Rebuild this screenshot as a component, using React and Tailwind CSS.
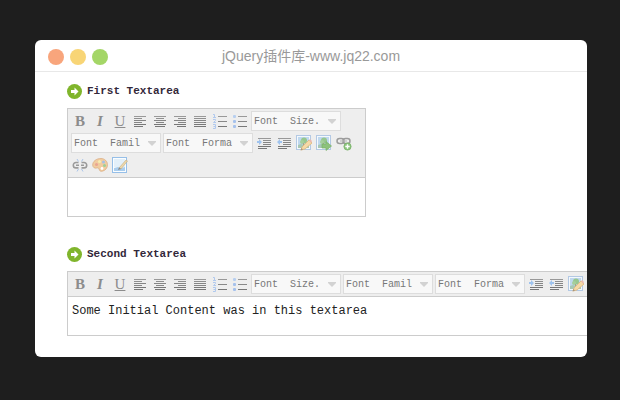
import React from 'react';

const lineIcons = {
    left: [[2, 12], [2, 8], [2, 12], [2, 8], [2, 12], [2, 9]],
    center: [[2, 12], [4, 8], [2, 12], [4, 8], [2, 12], [3, 10]],
    right: [[2, 12], [6, 8], [2, 12], [6, 8], [2, 12], [5, 9]],
    justify: [[2, 12], [2, 12], [2, 12], [2, 12], [2, 12], [2, 12]],
    indent: [[2, 13], [7, 8], [7, 8], [7, 8], [2, 13], [2, 9]],
};

const lineColors = ['#999999', '#8f8f8f', '#858585', '#858585', '#777777', '#777777'];

const Svg = ({ children }) => (
    <svg className="size-4" viewBox="0 0 16 16" aria-hidden="true">{children}</svg>
);

const Lines = ({ type }) => lineIcons[type].map(([x, width], i) => (
    <rect key={i} x={x} y={3 + i * 2} width={width} height="1" fill={lineColors[i]} />
));

const ListLines = () => (
    <>
        <rect x="6" y="3" width="9" height="1" fill="#999" />
        <rect x="6" y="8" width="9" height="1" fill="#888" />
        <rect x="6" y="13" width="9" height="1" fill="#777" />
    </>
);

const Photo = () => (
    <>
        <rect x="0.5" y="0.5" width="14" height="14" fill="#f4f8fc" stroke="#b3c9e4" />
        <rect x="2" y="2" width="11" height="11" fill="#bfd8ee" />
        <path d="M2 10l3-1 3 1 5-1v4H2z" fill="#a8c8b4" />
        <circle cx="8" cy="5.5" r="3" fill="#98c78f" />
        <circle cx="6" cy="7" r="2" fill="#a6cf9b" />
        <path d="M7 8h1v4H7z" fill="#a8a488" />
    </>
);

const icons = {
    left: <Svg><Lines type="left" /></Svg>,
    center: <Svg><Lines type="center" /></Svg>,
    right: <Svg><Lines type="right" /></Svg>,
    justify: <Svg><Lines type="justify" /></Svg>,
    ordered: (
        <Svg>
            <path d="M1 1.500h1.500V4M1 4.500h3M1 6.500h2.500v1L1.500 9.500H4M1 11.500h2.500v4H1M1.500 13.500h2" fill="none" stroke="#b0c9ee" />
            <ListLines />
        </Svg>
    ),
    unordered: (
        <Svg>
            <rect x="1" y="2" width="3" height="3" rx="1" fill="#b7cff0" />
            <rect x="1" y="7" width="3" height="3" rx="1" fill="#a5c1ec" />
            <rect x="1" y="12" width="3" height="3" rx="1" fill="#a5c1ec" />
            <ListLines />
        </Svg>
    ),
    indent: (
        <Svg>
            <Lines type="indent" />
            <path d="M1 6h2V4l3 3-3 3V8H1z" fill="#9fc3ee" />
        </Svg>
    ),
    outdent: (
        <Svg>
            <Lines type="indent" />
            <path d="M6 6H4V4L1 7l3 3V8h2z" fill="#9fc3ee" />
        </Svg>
    ),
    image: (
        <Svg>
            <Photo />
            <path d="M5 15l1-3 7-7 3 3-7 6z" fill="#f6d9a6" stroke="#dcb67c" strokeWidth="0.8" />
            <path d="M4.500 15.500l1-2.500 1.500 1.500z" fill="#a99478" />
            <path d="M13 5l1-1 2 2-1 2z" fill="#eab9b0" />
        </Svg>
    ),
    upload: (
        <Svg>
            <Photo />
            <path d="M6 9h4V6.500l5.500 4.500-5.500 4.500V13H6z" fill="#8dc27c" stroke="#7ab169" strokeWidth="0.7" />
        </Svg>
    ),
    link: (
        <Svg>
            <g fill="none" stroke="#9c9c9c" strokeWidth="1.5">
                <rect x="1" y="3.500" width="7" height="5" rx="2.500" />
                <rect x="7" y="3.500" width="7" height="5" rx="2.500" />
            </g>
            <path d="M4 6h7" stroke="#b5b5b5" strokeWidth="1.2" />
            <circle cx="11.500" cy="11.500" r="3.600" fill="#8cc47d" stroke="#78b268" strokeWidth="0.8" />
            <path d="M11.500 9.300v4.400M9.300 11.500h4.400" stroke="#fff" strokeWidth="1.4" />
        </Svg>
    ),
    unlink: (
        <Svg>
            <path d="M6.500 5.500H4a2.700 2.700 0 0 0 0 5.400h2.500M9.500 5.500H12a2.700 2.700 0 0 1 0 5.400H9.500M4 8.200h3M9 8.200h3" fill="none" stroke="#9a9a9a" strokeWidth="1.6" />
            <path d="M5 2l1.500 2.500M11 2L9.500 4.500M5 14.500L6.500 12M11 14.500L9.500 12" stroke="#a9c4e8" />
        </Svg>
    ),
    color: (
        <Svg>
            <path d="M9 1.500C4 1.500 0.700 4.500 0.700 8c0 2.500 2 3.500 4 3 1.500-.4 2.300.4 2.500 1.500.3 1.500 1.500 2 3 1.700 3-.6 5.300-3 5.300-6.500 0-3.500-3-6.200-6.500-6.200z" fill="#f1cca0" stroke="#dcb088" strokeWidth="0.8" />
            <circle cx="4.500" cy="7.500" r="1.500" fill="#eaa593" />
            <circle cx="7.500" cy="4.500" r="1.500" fill="#f6eeb0" />
            <circle cx="11.500" cy="5" r="1.500" fill="#a3c0e6" />
            <circle cx="12.500" cy="8.500" r="1.500" fill="#9fcf95" />
            <circle cx="10" cy="11.500" r="1.400" fill="#fff" />
        </Svg>
    ),
    source: (
        <Svg>
            <rect x="0.5" y="0.5" width="14" height="15" fill="#fafdff" stroke="#96bfe8" />
            <path d="M2 2h11v8H2z" fill="#e3f0fa" />
            <path d="M2 11l4-1 3 1 4-1v4H2z" fill="#a9cdee" />
            <path d="M7 11l7-8 1.500 1L9 12z" fill="#eed9ac" stroke="#c4ab7e" strokeWidth="0.6" />
            <path d="M6 13l1-2.500L9 12z" fill="#888" />
        </Svg>
    ),
};

const formatButtons = [
    { label: 'Align left', icon: 'left' },
    { label: 'Align center', icon: 'center' },
    { label: 'Align right', icon: 'right' },
    { label: 'Justify', icon: 'justify' },
    { label: 'Ordered list', icon: 'ordered' },
    { label: 'Unordered list', icon: 'unordered' },
];

const insertButtons = [
    { label: 'Indent', icon: 'indent' },
    { label: 'Outdent', icon: 'outdent' },
    { label: 'Image', icon: 'image' },
    { label: 'Upload', icon: 'upload' },
    { label: 'Link', icon: 'link' },
    { label: 'Unlink', icon: 'unlink' },
    { label: 'Color', icon: 'color' },
    { label: 'Source', icon: 'source' },
];

const selects = [
    { label: 'Font size', text: 'Font\u00a0\u00a0Size.' },
    { label: 'Font family', text: 'Font\u00a0\u00a0Famil' },
    { label: 'Font format', text: 'Font\u00a0\u00a0Forma' },
];

const ToolButton = ({ label, children }) => (
    <button
        type="button"
        aria-label={label}
        className="flex h-[22px] w-5 shrink-0 items-center justify-center font-['Liberation_Serif',serif] text-[15px] leading-4 text-[#8c8c8c]"
    >
        {children}
    </button>
);

const ToolSelect = ({ label, text }) => (
    <div className="m-px grid h-5 w-[90px] shrink-0 items-center border border-[#dddddd] bg-[#f8f8f8]">
        <select
            aria-label={label}
            className="col-start-1 row-start-1 h-[18px] w-full appearance-none pl-0.5 pt-0.5 font-['Liberation_Mono',monospace] text-[10px] leading-4 text-[#777777]"
        >
            <option>{text}</option>
        </select>
        <svg className="pointer-events-none col-start-1 row-start-1 mr-1 h-[5px] w-2 justify-self-end" viewBox="0 0 8 5" aria-hidden="true">
            <path d="M0 0h8v1L4 5 0 1z" fill="#d2d2d2" />
        </svg>
    </div>
);

const Editor = ({ id, title, value, wide }) => (
    <section>
        <div className="flex h-4 items-center gap-[5px]">
            <svg className="size-[15px]" viewBox="0 0 15 15" aria-hidden="true">
                <circle cx="7.5" cy="7.5" r="7.5" fill="#80b52c" />
                <path d="M4 6h3.500V3.500l4 4-4 4V9H4z" fill="#fff" />
            </svg>
            <label htmlFor={id} className="font-['Liberation_Mono',monospace] text-[11px] font-bold leading-4 text-[#33283a]">{title}</label>
        </div>
        <div className={`mt-[9px] border border-[#cccccc] ${wide ? 'w-[740px]' : 'w-[299px]'}`}>
            <div className="flex flex-wrap border-b border-[#cccccc] bg-[#eeeeee] px-0.5 py-px">
                <ToolButton label="Bold"><b>B</b></ToolButton>
                <ToolButton label="Italic"><i className="font-bold">I</i></ToolButton>
                <ToolButton label="Underline"><u>U</u></ToolButton>
                {formatButtons.map(({ label, icon }) => (
                    <ToolButton key={label} label={label}>{icons[icon]}</ToolButton>
                ))}
                {selects.map((item) => (
                    <ToolSelect key={item.label} {...item} />
                ))}
                {insertButtons.map(({ label, icon }) => (
                    <ToolButton key={label} label={label}>{icons[icon]}</ToolButton>
                ))}
            </div>
            <textarea
                id={id}
                defaultValue={value}
                rows={1}
                className="block h-[38px] w-full resize-none overflow-hidden px-1 py-1.5 font-['Liberation_Mono',monospace] text-[12px] leading-4 text-[#222222] outline-none"
            />
        </div>
    </section>
);

const App = () => {
    return (
        <div className="min-h-screen bg-[#1e1e1e] py-10 pl-[35px] pr-[33px]">
            <main className="overflow-hidden rounded-md bg-white">
                {/* Window bar */}
                <header className="grid h-8 grid-cols-[1fr_auto_1fr] items-center border-b border-[#e8e8e8] px-[13px]">
                    <div className="flex gap-1.5 pt-0.5">
                        <span className="size-4 rounded-full bg-[#f8a57c]" />
                        <span className="size-4 rounded-full bg-[#f8d576]" />
                        <span className="size-4 rounded-full bg-[#a4d667]" />
                    </div>
                    <h1 className="font-['Liberation_Sans','Noto_Sans_CJK_SC',sans-serif] text-[14px] leading-5 text-[#999999]">jQuery插件库-www.jq22.com</h1>
                </header>

                {/* Editors */}
                <div className="flex flex-col gap-[29px] pb-[21px] pl-8 pt-[11px]">
                    <Editor id="first" title="First Textarea" value="" />
                    <Editor id="second" title="Second Textarea" value="Some Initial Content was in this textarea" wide />
                </div>
            </main>
        </div>
    );
};

export default App;
